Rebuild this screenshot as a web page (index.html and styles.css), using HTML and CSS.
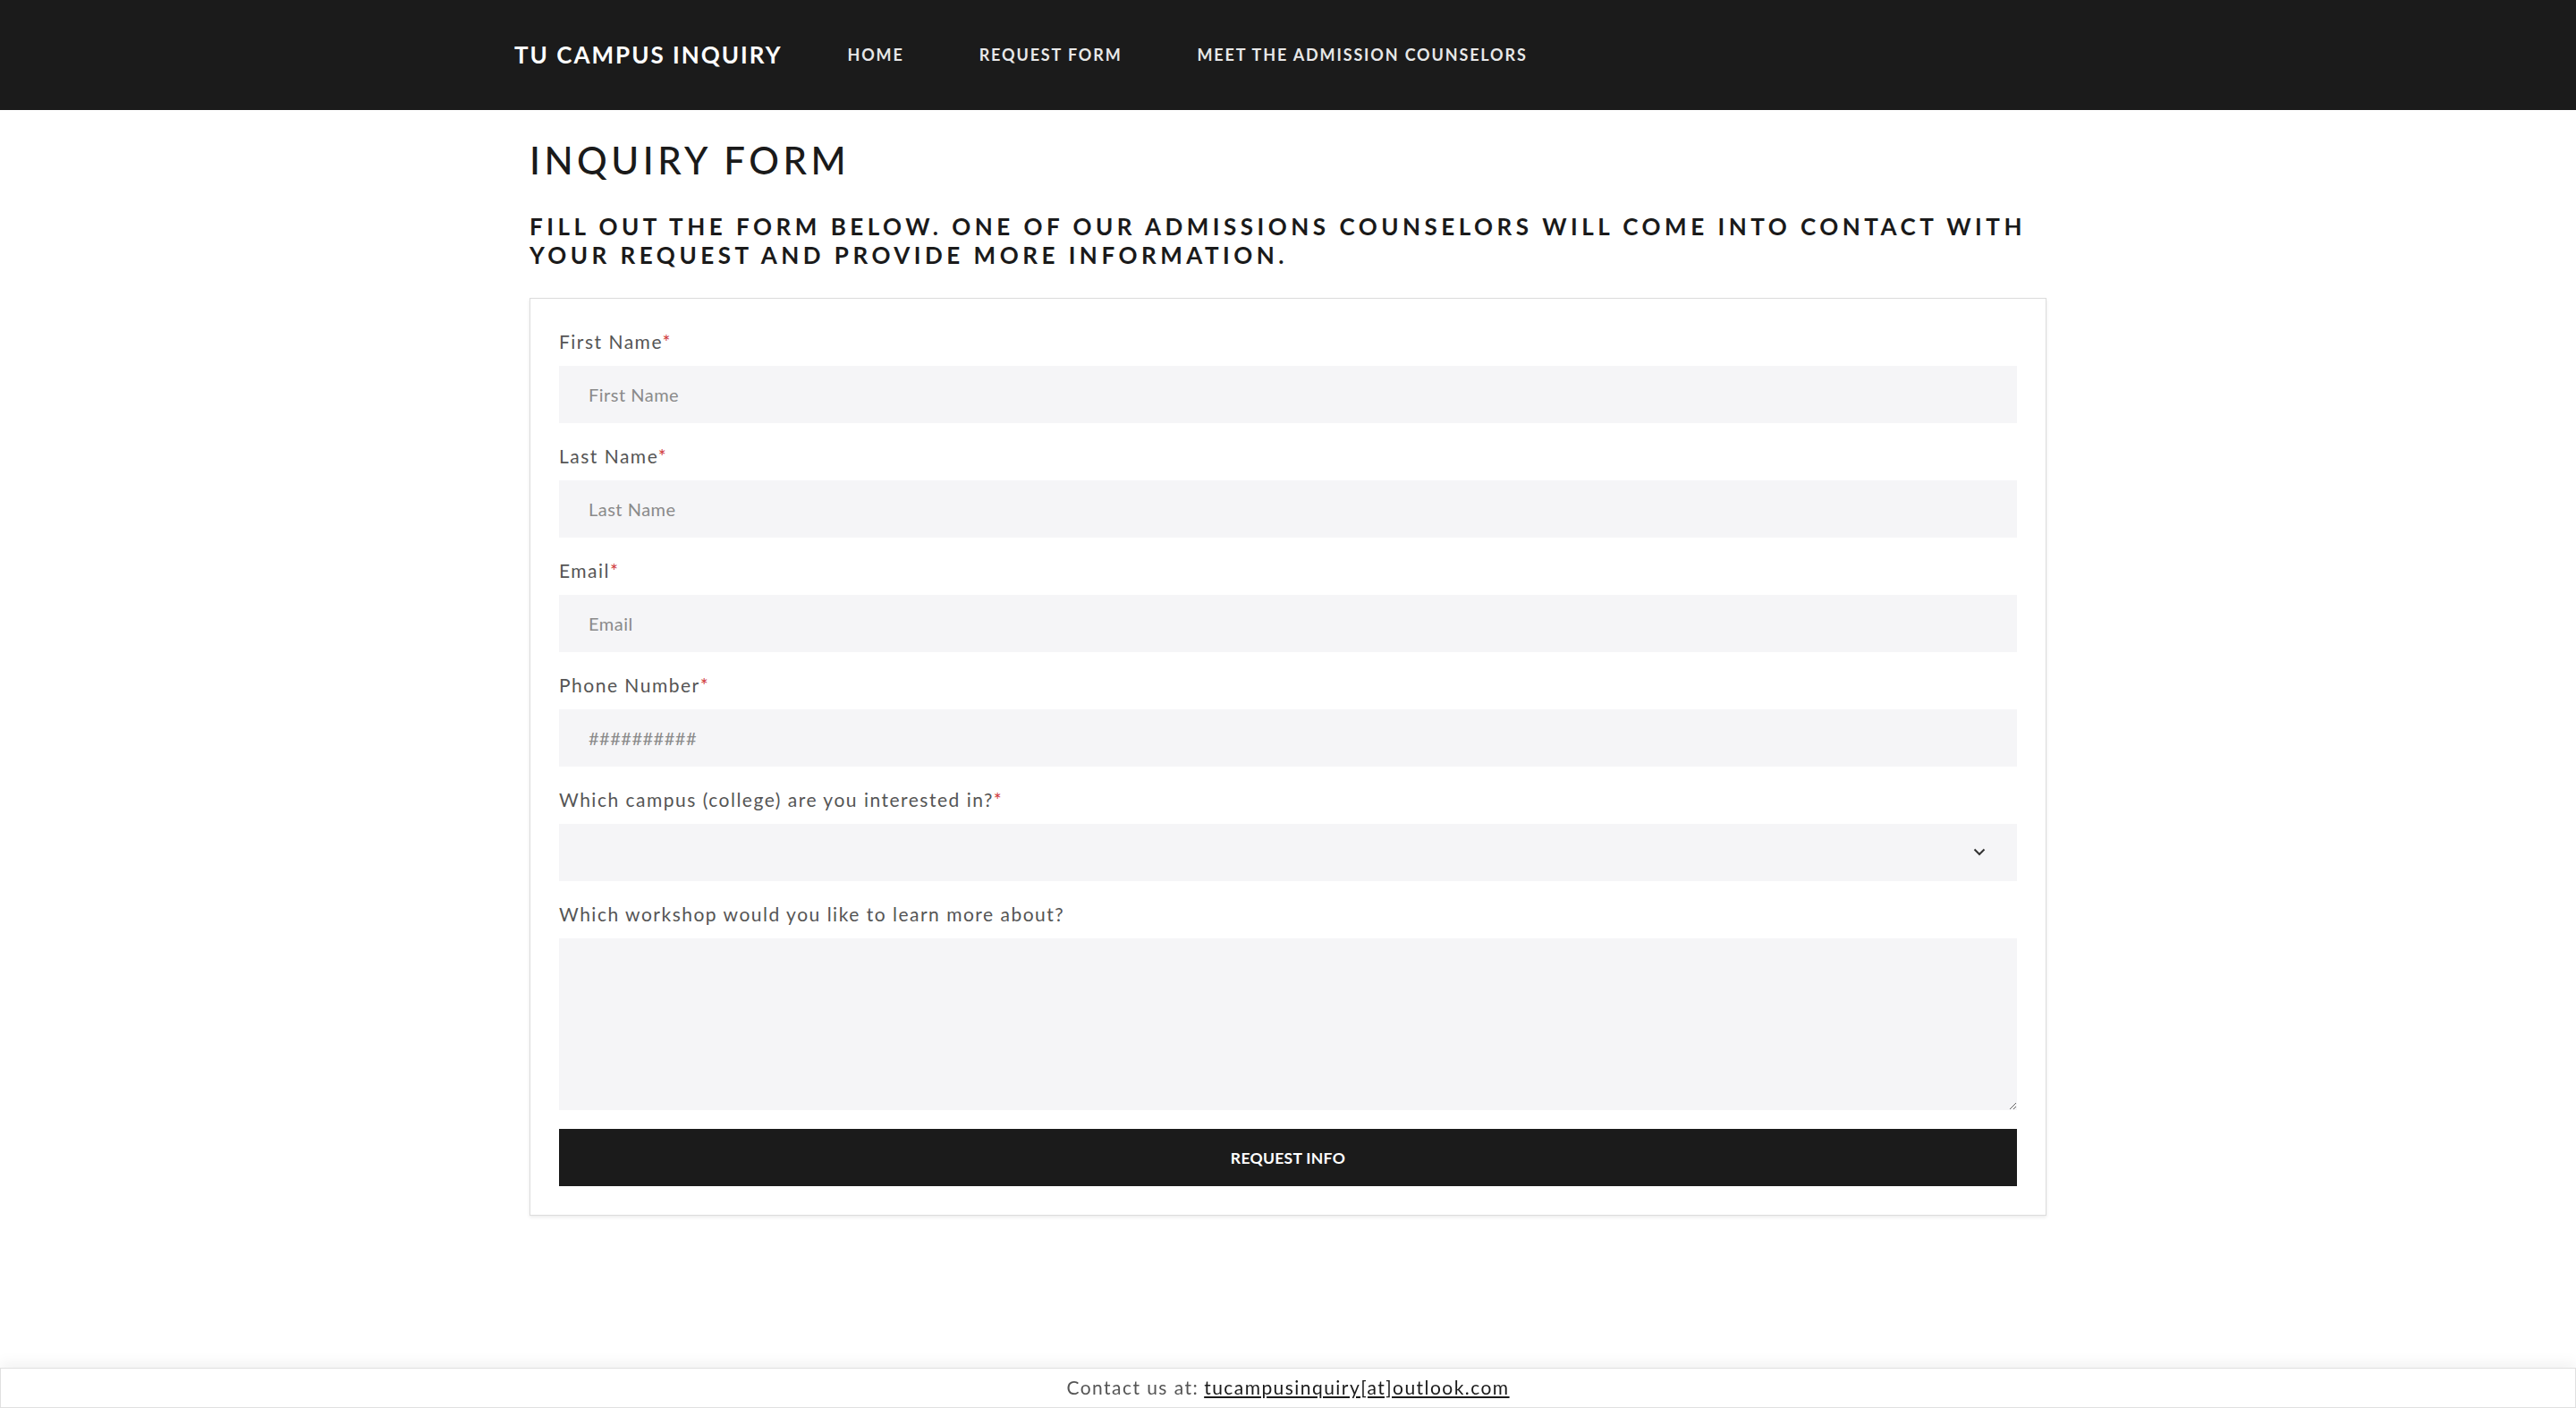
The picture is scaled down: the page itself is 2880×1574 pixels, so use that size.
FILE: index.html
```html
<!DOCTYPE html>
<html lang="en">
<head>
<meta charset="utf-8">
<title>TU Campus Inquiry</title>
<link rel="stylesheet" href="styles.css">
</head>
<body>
<header class="topbar">
  <div class="topbar-inner">
    <a class="brand" href="#">TU CAMPUS INQUIRY</a>
    <nav class="nav">
      <a href="#">HOME</a>
      <a href="#">REQUEST FORM</a>
      <a href="#">MEET THE ADMISSION COUNSELORS</a>
    </nav>
  </div>
</header>
<main class="page">
  <h1 class="title">INQUIRY FORM</h1>
  <h2 class="subtitle">FILL OUT THE FORM BELOW. ONE OF OUR ADMISSIONS COUNSELORS WILL COME INTO CONTACT WITH YOUR REQUEST AND PROVIDE MORE INFORMATION.</h2>
  <form class="card">
    <label class="label">First Name<span class="req">*</span></label>
    <input class="field" type="text" placeholder="First Name">
    <label class="label">Last Name<span class="req">*</span></label>
    <input class="field" type="text" placeholder="Last Name">
    <label class="label">Email<span class="req">*</span></label>
    <input class="field" type="text" placeholder="Email">
    <label class="label">Phone Number<span class="req">*</span></label>
    <input class="field" type="text" placeholder="##########">
    <label class="label">Which campus (college) are you interested in?<span class="req">*</span></label>
    <div class="select-wrap">
      <select class="field select"><option></option></select>
      <svg class="chev" width="14" height="9" viewBox="0 0 14 9"><path d="M1.5 1.5 L7 7 L12.5 1.5" fill="none" stroke="#333" stroke-width="2"/></svg>
    </div>
    <label class="label">Which workshop would you like to learn more about?</label>
    <textarea class="field area"></textarea>
    <button class="btn" type="button">REQUEST INFO</button>
  </form>
</main>
<footer class="footer">Contact us at: <a href="#">tucampusinquiry[at]outlook.com</a></footer>
</body>
</html>
```
FILE: styles.css
```css
* { box-sizing: border-box; }
html, body { margin: 0; padding: 0; }
body {
  font-family: "Lato", "Open Sans", sans-serif;
  background: #fff;
  color: #1a1a1a;
}
a { color: inherit; text-decoration: none; }

.topbar {
  background: #1b1b1b;
  height: 123px;
}
.topbar-inner {
  height: 100%;
  display: flex;
  align-items: center;
  padding-left: 575px;
  padding-bottom: 2px;
}
.brand {
  color: #fff;
  font-weight: 700;
  font-size: 26px;
  letter-spacing: 2px;
}
.nav {
  display: flex;
  margin-left: 31px;
}
.nav a {
  color: #e8e8e8;
  font-size: 18px;
  font-weight: 700;
  letter-spacing: 1.85px;
  padding: 0 42px;
}

.page {
  width: 1696px;
  margin: 0 auto;
  padding-bottom: 120px;
}
.title {
  margin: 0;
  padding-top: 31px;
  font-size: 42px;
  font-weight: 500;
  letter-spacing: 4.5px;
  line-height: 50px;
  color: #1a1a1a;
}
.subtitle {
  margin: 33px 0 0;
  font-size: 26px;
  font-weight: 700;
  letter-spacing: 4.5px;
  line-height: 32px;
  color: #1a1a1a;
}
.card {
  margin-top: 32px;
  border: 1px solid #dcdcdc;
  box-shadow: 0 2px 4px rgba(0,0,0,0.08);
  padding: 33px 32px 32px;
  display: flex;
  flex-direction: column;
}
.label {
  display: block;
  font-size: 21px;
  line-height: 30px;
  letter-spacing: 1.5px;
  color: #555;
  margin-bottom: 12px;
}
.req { color: #d0393b; }
.field {
  display: block;
  width: 100%;
  height: 64px;
  border: 0;
  background: #f5f5f7;
  padding: 0 33px;
  font-family: "Lato", sans-serif;
  font-size: 20px;
  letter-spacing: 0.5px;
  color: #333;
  margin-bottom: 22px;
  outline: none;
}
.field::placeholder { color: #8a8a8a; }
.select-wrap {
  position: relative;
}
.select {
  appearance: none;
  -webkit-appearance: none;
  border-radius: 0;
}
.chev {
  position: absolute;
  right: 35px;
  top: 27px;
}
.area {
  height: 192px;
  resize: vertical;
  padding: 20px 33px;
  margin-bottom: 21px;
}
.btn {
  height: 64px;
  width: 100%;
  border: 0;
  background: #1b1b1b;
  color: #fff;
  font-family: "Lato", sans-serif;
  font-weight: 700;
  font-size: 17.5px;
  letter-spacing: 0.3px;
}

.footer {
  position: fixed;
  left: 0;
  right: 0;
  bottom: 0;
  height: 45px;
  background: #fff;
  border: 1px solid #e0e0e0;
  box-shadow: 0 -6px 14px rgba(0,0,0,0.05);
  display: flex;
  align-items: center;
  justify-content: center;
  padding-bottom: 2px;
  font-size: 21px;
  letter-spacing: 1.45px;
  color: #555;
}
.footer a {
  color: #1a1a1a;
  text-decoration: underline;
  margin-left: 6px;
}
```
